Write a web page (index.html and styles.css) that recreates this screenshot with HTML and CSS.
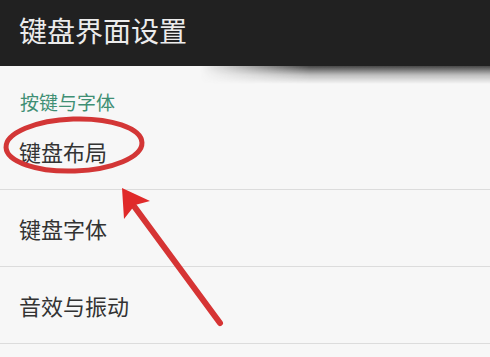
FILE: index.html
```html
<!DOCTYPE html>
<html lang="zh">
<head>
<meta charset="utf-8">
<link rel="stylesheet" href="styles.css">
</head>
<body>
<div class="page">
  <header class="bar">
    <h1 class="title">键盘界面设置</h1>
  </header>
  <div class="bar-shadow"></div>
  <div class="section-label">按键与字体</div>
  <ul class="list">
    <li class="row">键盘布局</li>
    <li class="row">键盘字体</li>
    <li class="row">音效与振动</li>
  </ul>
  <svg class="marks" width="490" height="357" viewBox="0 0 490 357">
    <ellipse cx="74" cy="145" rx="68" ry="26" transform="rotate(-2 74 145)" fill="none" stroke="#d33636" stroke-width="5"/>
    <line x1="220" y1="323" x2="128" y2="198" stroke="#d63434" stroke-width="6" stroke-linecap="round"/>
    <polygon points="122,188 150,201 135,205 124,219" fill="#e02a2a"/>
  </svg>
</div>
</body>
</html>
```
FILE: styles.css
```css
* { box-sizing: border-box; }
html, body { margin: 0; padding: 0; }
body {
  background: #f7f7f7;
  font-family: "Noto Sans CJK SC", "Noto Sans", sans-serif;
  width: 490px;
  height: 357px;
  overflow: hidden;
}
.page { position: relative; width: 490px; height: 357px; }
.bar {
  height: 66px;
  background: #212121;
  display: flex;
  align-items: center;
  padding-left: 19px;
}
.title {
  margin: 0;
  font-size: 28px;
  font-weight: 400;
  color: #ececec;
  line-height: 1;
  padding-bottom: 6px;
}
.bar-shadow {
  position: absolute;
  left: 200px;
  top: 66px;
  width: 290px;
  height: 18px;
  background: linear-gradient(to bottom, rgba(40,40,40,0.85), rgba(60,60,60,0.3) 50%, rgba(80,80,80,0));
  -webkit-mask-image: linear-gradient(to right, transparent, #000 110px);
  mask-image: linear-gradient(to right, transparent, #000 110px);
}
.section-label {
  height: 47px;
  display: flex;
  align-items: center;
  padding: 23px 0 0 20px;
  font-size: 19px;
  color: #3f8f74;
  line-height: 1;
}
.list { list-style: none; margin: 0; padding: 0; }
.row {
  height: 77px;
  border-bottom: 1px solid #dcdcdc;
  display: flex;
  align-items: center;
  padding-left: 19px;
  font-size: 22px;
  color: #333;
  line-height: 1;
}
.marks {
  position: absolute;
  left: 0;
  top: 0;
  pointer-events: none;
}
```
